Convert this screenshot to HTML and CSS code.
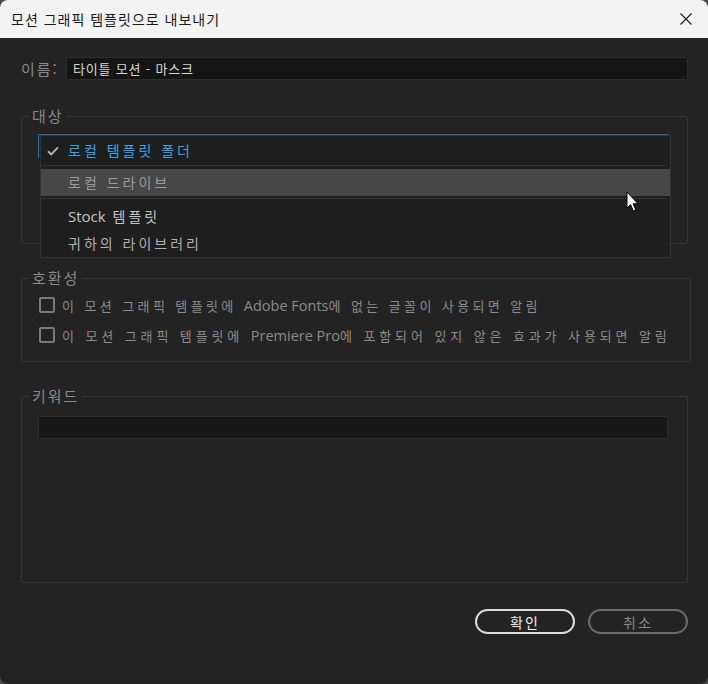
FILE: index.html
```html
<!DOCTYPE html>
<html lang="ko">
<head>
  <meta charset="UTF-8">
  <title>모션 그래픽 템플릿으로 내보내기</title>
  <link rel="stylesheet" href="styles.css">
</head>
<body>
  <div class="window">
    <div class="titlebar">
      <span class="title">모션 그래픽 템플릿으로 내보내기</span>
      <span class="close">
        <svg width="14" height="14" viewBox="0 0 14 14"><path d="M1.5 1.5 L12.5 12.5 M12.5 1.5 L1.5 12.5" stroke="#1b1b1b" stroke-width="1.1" fill="none"/></svg>
      </span>
    </div>

    <div class="content">
      <div class="name-row">
        <label class="name-label">이름:</label>
        <div class="text-input name-input">타이틀 모션 - 마스크</div>
      </div>

      <fieldset class="group">
        <legend>대상</legend>
        <div class="target-body">
          <div class="select"></div>
          <div class="popup">
            <div class="item checked">
              <svg class="check" width="12" height="10" viewBox="0 0 12 10"><path d="M1 5.2 L4.2 8.4 L11 1.4" stroke="#b4b4b4" stroke-width="2" fill="none"/></svg>
              로컬 템플릿 폴더
            </div>
            <div class="sep"></div>
            <div class="item hover">로컬 드라이브</div>
            <div class="sep sep-low"></div>
            <div class="item stock"><span class="en">Stock</span> 템플릿</div>
            <div class="item last">귀하의 라이브러리</div>
          </div>
        </div>
      </fieldset>

      <fieldset class="group compat">
        <legend>호환성</legend>
        <div class="check-row"><span class="box"></span><span>이 모션 그래픽 템플릿에 <span class="en">Adobe Fonts</span>에 없는 글꼴이 사용되면 알림</span></div>
        <div class="check-row"><span class="box"></span><span class="long">이 모션 그래픽 템플릿에 <span class="en">Premiere Pro</span>에 포함되어 있지 않은 효과가 사용되면 알림</span></div>
      </fieldset>

      <fieldset class="group keywords">
        <legend>키워드</legend>
        <div class="text-input keyword-input"></div>
      </fieldset>

      <div class="buttons">
        <button class="btn ok">확인</button>
        <button class="btn cancel">취소</button>
      </div>
    </div>

    <svg class="cursor" width="14" height="22" viewBox="0 0 14 22">
      <path d="M1 1 L1 17 L4.6 13.6 L7.4 20 L9.8 19 L7.1 12.8 L12 12.8 Z" fill="#ffffff" stroke="#000000" stroke-width="1"/>
    </svg>
  </div>
</body>
</html>
```

FILE: styles.css
```css
body {
  margin: 0;
  background: #4a4a4a;
  font-family: "Noto Sans CJK KR", "Noto Sans", sans-serif;
}
.window {
  position: relative;
  width: 708px;
  height: 684px;
  background: #232323;
  border-radius: 8px;
  overflow: hidden;
}
.titlebar {
  height: 38px;
  background: #f3f3f3;
  display: flex;
  align-items: center;
  justify-content: space-between;
  padding: 0 15px 0 11px;
}
.title {
  font-size: 14px;
  letter-spacing: 1px;
  color: #1a1a1a;
}
.close {
  display: flex;
}
.content {
  padding: 19px 20px 0 21px;
}
.name-row {
  display: flex;
  align-items: center;
  height: 23px;
}
.name-label {
  width: 45px;
  font-size: 15px;
  letter-spacing: 2px;
  color: #8a8a8a;
}
.text-input {
  background: #141414;
  border: 1px solid #2e2e2e;
  border-radius: 2px;
  box-sizing: border-box;
}
.name-input {
  flex: 1;
  height: 23px;
  line-height: 21px;
  padding: 0 6px;
  font-size: 13px;
  letter-spacing: 0.8px;
  color: #d6d6d6;
}
.en {
  font-family: "Open Sans", sans-serif;
  letter-spacing: 0;
}
.group {
  margin: 27px 0 0 0;
  padding: 0 19px 0 16px;
  border: 1px solid #353535;
  border-radius: 2px;
}
.group legend {
  margin-left: -9px;
  padding: 0 3px;
  font-size: 15px;
  line-height: 18px;
  letter-spacing: 2px;
  color: #8a8a8a;
}
.target-body {
  position: relative;
  height: 109px;
  padding-top: 9px;
}
.select {
  height: 24px;
  background: #1e1e1e;
  border-top: 1px solid #22709f;
  border-left: 1px solid #22709f;
  box-sizing: border-box;
}
.popup {
  position: absolute;
  left: 2px;
  top: 10px;
  width: 631px;
  background: #1e1e1e;
  border: 1px solid #333333;
  box-sizing: border-box;
  font-size: 14px;
  letter-spacing: 3px;
}
.item {
  position: relative;
  height: 28px;
  line-height: 28px;
  padding-left: 27px;
  color: #b0b0b0;
}
.item.checked {
  height: 29px;
  line-height: 29px;
  color: #3ba3e6;
}
.check {
  position: absolute;
  left: 6px;
  top: 10px;
}
.item.hover {
  height: 27px;
  line-height: 27px;
  background: #474747;
  color: #9c9c9c;
}
.item.stock {
  color: #c4c4c4;
}
.item.stock .en {
  font-size: 15px;
}
.item.last {
  height: 27px;
  line-height: 27px;
}
.sep {
  height: 1px;
  margin: 0 4px 3px 0;
  background: #333333;
}
.sep-low {
  margin-top: 2px;
}
.compat {
  margin-top: 25px;
  padding-top: 3px;
  padding-bottom: 11px;
}
.check-row {
  display: flex;
  align-items: center;
  height: 30px;
  font-size: 13px;
  letter-spacing: 3.4px;
  color: #8c8c8c;
  white-space: nowrap;
}
.check-row .long {
  letter-spacing: 3.9px;
}
.check-row .en {
  font-size: 14.5px;
  letter-spacing: 0;
}
.box {
  width: 16px;
  height: 16px;
  margin: 0 7px 0 1px;
  border: 2px solid #7b7b7b;
  border-radius: 2px;
  box-sizing: border-box;
  flex-shrink: 0;
}
.keywords {
  margin-top: 25px;
  height: 196px;
  box-sizing: border-box;
}
.keyword-input {
  margin-top: 11px;
  height: 23px;
  background: #171717;
}
.buttons {
  display: flex;
  justify-content: flex-end;
  gap: 13px;
  margin-top: 26px;
}
.btn {
  width: 100px;
  height: 25px;
  background: transparent;
  border-radius: 13px;
  font-family: "Noto Sans CJK KR", sans-serif;
  font-size: 14px;
  letter-spacing: 2px;
  padding: 0;
}
.btn.ok {
  border: 2px solid #dcdcdc;
  color: #f0f0f0;
}
.btn.cancel {
  border: 2px solid #6a6a6a;
  color: #8a8a8a;
}
.cursor {
  position: absolute;
  left: 626px;
  top: 191px;
}
```
